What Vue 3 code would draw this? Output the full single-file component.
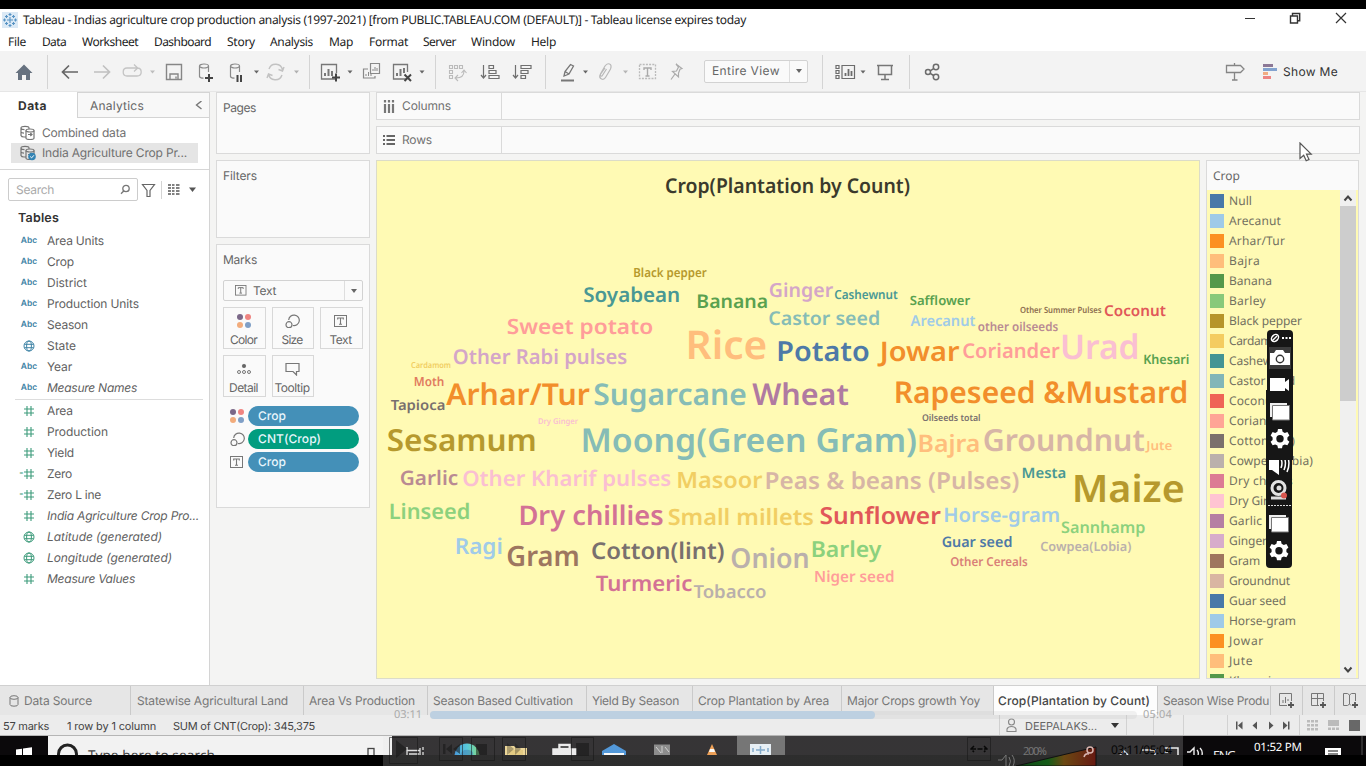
<script setup>
const vFit = {
  mounted(el, { value }) {
    const n = el.textContent.trim().length
    const natural = el.getBoundingClientRect().width
    if (value && n > 1) el.style.letterSpacing = ((value - natural) / n).toFixed(3) + 'px'
  }
}

const menus = [['File', 18, 16], ['Data', 24, 16], ['Worksheet', 56, 16], ['Dashboard', 57, 16], ['Story', 28, 15], ['Analysis', 43, 16], ['Map', 24, 16], ['Format', 39, 15], ['Server', 33, 15], ['Window', 44, 16], ['Help', 25, 0]]

const dims = [
  ['abc', 'Area Units', 57], ['abc', 'Crop', 27], ['abc', 'District', 40], ['abc', 'Production Units', 92],
  ['abc', 'Season', 41], ['geo', 'State', 29], ['abc', 'Year', 25], ['abc', 'Measure Names', 90, true]
]
const measures = [
  ['num', 'Area', 26], ['num', 'Production', 61], ['num', 'Yield', 27], ['calc', 'Zero', 25], ['calc', 'Zero L ine', 54],
  ['num', 'India Agriculture Crop Pro...', 152, true], ['geo', 'Latitude (generated)', 115, true],
  ['geo', 'Longitude (generated)', 125, true], ['num', 'Measure Values', 88, true]
]

const words = [
  ['Black pepper', 634, 706, 276.7, 12.5, '#b6992d'], ['Soyabean', 584.5, 679, 301.5, 20.5, '#499894'],
  ['Banana', 697.5, 767, 308, 19, '#59a14f'], ['Ginger', 770, 832, 296.7, 19.5, '#d4a6c8'],
  ['Cashewnut', 835, 897, 299.3, 12.5, '#499894'], ['Safflower', 910.5, 969.5, 305, 12.8, '#59a14f'],
  ['Castor seed', 769.5, 879, 324.7, 19, '#86bcb6'], ['Sweet potato', 508, 652, 333.7, 21, '#ff9d9a'],
  ['Arecanut', 911.5, 974.5, 326, 15, '#a0cbe8'], ['other oilseeds', 978.5, 1057.5, 331, 12.3, '#b98a93'],
  ['Other Summer Pulses', 1020.5, 1101, 313, 8.6, '#8c6d4e'], ['Coconut', 1105, 1165, 316, 15, '#e15759'],
  ['Rice', 688, 765, 358.5, 39.5, '#ffbe7d'], ['Potato', 778, 868, 361.3, 27.5, '#4e79a7'],
  ['Jowar', 881.5, 958, 360.7, 27, '#f28e2b'], ['Coriander', 963.5, 1058.5, 357.7, 20.3, '#ff9d9a'],
  ['Urad', 1062, 1137.5, 358.5, 34, '#fabfd2'], ['Khesari', 1144, 1188.5, 364, 13, '#59a14f'],
  ['Other Rabi pulses', 454, 626, 364, 20.5, '#d4a6c8'], ['Cardamom', 411.5, 450.5, 368, 8.3, '#f1ce63'],
  ['Moth', 414.5, 443.5, 386, 12.5, '#e17a60'], ['Tapioca', 391.5, 444.5, 410, 14, '#79706e'],
  ['Arhar/Tur', 448, 588, 405, 30, '#f28e2b'], ['Sugarcane', 595, 745, 405, 30, '#86bcb6'],
  ['Wheat', 754, 847, 405, 30, '#b07aa1'], ['Rapeseed &Mustard', 895.5, 1186.5, 402.7, 30, '#f28e2b'],
  ['Oilseeds total', 922.5, 980, 421, 9.3, '#79706e'], ['Dry Ginger', 538.5, 577.5, 424, 8, '#fabfd2'],
  ['Sesamum', 388.5, 535, 450.7, 30.5, '#b6992d'], ['Moong(Green Gram)', 582.5, 915, 451.7, 33, '#86bcb6'],
  ['Bajra', 919, 979, 451.7, 24, '#ffbe7d'], ['Groundnut', 984.5, 1143, 450.7, 30.5, '#d7b5a6'],
  ['Jute', 1147, 1171.5, 450, 12.5, '#ffbe7d'], ['Garlic', 401, 457, 484.7, 20, '#b98a93'],
  ['Other Kharif pulses', 463.5, 670, 486.3, 21.5, '#fabfd2'], ['Masoor', 677.5, 761, 488.3, 22.5, '#f1ce63'],
  ['Peas & beans (Pulses)', 766, 1018, 488.5, 23.5, '#d7b5a6'], ['Mesta', 1022.5, 1065.5, 478.3, 14.5, '#499894'],
  ['Maize', 1074, 1182.5, 502.3, 38, '#b6992d'], ['Linseed', 390, 469, 518.7, 21.5, '#8cd17d'],
  ['Dry chillies', 520, 662, 524.7, 27, '#d37295'], ['Small millets', 669, 812.5, 524.7, 22.5, '#f1ce63'],
  ['Sunflower', 821, 939.5, 523.5, 23.5, '#e15759'], ['Horse-gram', 944.5, 1059, 521.7, 20, '#a0cbe8'],
  ['Sannhamp', 1062, 1144.5, 533.3, 16, '#8cd17d'], ['Ragi', 456, 501.5, 553.7, 22, '#a0cbe8'],
  ['Gram', 508, 578, 565.7, 28, '#9d7660'], ['Cotton(lint)', 592.5, 723, 558.5, 23, '#79706e'],
  ['Onion', 732, 808, 567.5, 27.5, '#bab0ac'], ['Barley', 812, 880, 556.7, 22, '#8cd17d'],
  ['Guar seed', 942.5, 1011.5, 546.8, 14.5, '#4e79a7'], ['Cowpea(Lobia)', 1041, 1130.5, 551.3, 12.8, '#bab0ac'],
  ['Other Cereals', 951, 1027, 566, 12.3, '#d98078'], ['Niger seed', 815, 893.5, 582, 15.5, '#ff9d9a'],
  ['Turmeric', 597, 691, 590.7, 21.5, '#d37295'], ['Tobacco', 694.5, 765.5, 597.7, 18, '#bab0ac']
]

const legend = [
  ['Null', '#4878a8', 23], ['Arecanut', '#9fcae8', 52], ['Arhar/Tur', '#fc9022', 56], ['Bajra', '#ffbe7b', 31], ['Banana', '#54984a', 43],
  ['Barley', '#88c97a', 37], ['Black pepper', '#b6942a', 73], ['Cardamom', '#f4cc60', 60], ['Cashewnut', '#449494', 62],
  ['Castor seed', '#82b6b8', 66], ['Coconut', '#ef6456', 48], ['Coriander', '#ffa596', 57], ['Cotton(lint)', '#7b706c', 66],
  ['Cowpea(Lobia)', '#bbb0ac', 84], ['Dry chillies', '#dc7b94', 64], ['Dry Ginger', '#ffc4d2', 60], ['Garlic', '#b57fa3', 33],
  ['Ginger', '#d7accb', 38], ['Gram', '#9f765e', 31], ['Groundnut', '#d9b5a2', 61], ['Guar seed', '#4878a8', 57],
  ['Horse-gram', '#9fcae8', 67], ['Jowar', '#fc9022', 35], ['Jute', '#ffbe7b', 24], ['Khesari', '#54984a', 42]
]

const tabs = [
  ['Statewise Agricultural Land', 173, 151], ['Area Vs Production', 124, 106], ['Season Based Cultivation', 159, 140],
  ['Yield By Season', 106, 87], ['Crop Plantation by Area', 149, 131], ['Major Crops growth Yoy', 152, 133],
  ['Crop(Plantation by Count)', 164, 152, true], ['Season Wise Produ', 113, 106]
]
</script>

<template>
  <div class="screen">
    <svg class="defs" width="0" height="0">
      <defs>
        <g id="geo" fill="none" stroke="currentColor" stroke-width="1"><circle cx="6" cy="6" r="5" /><ellipse cx="6" cy="6" rx="2.4" ry="5" /><path d="M1.4 4.3h9.2M1.4 7.7h9.2" /></g>
        <g id="num" fill="none" stroke="currentColor" stroke-width="1.1"><path d="M1 4h10M1 8h10M4 1v10M8 1v10" /></g>
        <g id="dots4"><circle cx="3" cy="3" r="3" fill="#7b6888" /><circle cx="11" cy="3" r="3" fill="#ef8481" /><circle cx="3" cy="11" r="3" fill="#f2ac7c" /><circle cx="11" cy="11" r="3" fill="#7f9fc6" /></g>
        <g id="sizes" fill="none" stroke="#777" stroke-width="1.2"><path d="M3.7 6A5.3 5.3 0 1 1 7.8 11.5" /><circle cx="4" cy="10.7" r="3" /></g>
        <g id="tbox"><rect x=".5" y=".5" width="12" height="11" fill="none" stroke="#777" /><path d="M3.7 4.5V3h5.6v1.5M6.5 3v6M5 9.2h3" fill="none" stroke="#777" stroke-width="1.1" /></g>
        <g id="cyl" fill="none" stroke="#8a8a8a" stroke-width="1.2"><ellipse cx="5" cy="2.5" rx="4.5" ry="2" /><path d="M.5 2.5v10.5q.5 1.6 4 1.6M9.5 2.5v6" /></g>
        <g id="dd"><path d="M0 0h5L2.500 3z" /></g>
        <g id="dbs" fill="none" stroke="#757575" stroke-width="1.200"><path d="M6 12H4q-2.500 0-3-1.500V3M1 3q0-1.700 4-1.700T9 3v1M1 3q0 1.500 3.500 1.600M1 7q.5 1 3 1.200" /><ellipse cx="10" cy="5.500" rx="4" ry="1.500" /><path d="M6 5.500v7.500q0 1.500 4 1.500t4-1.500V5.500M8 9.500h4M10.300 8l1.700 1.500-1.700 1.500" /></g>
        <g id="gear"><path fill-rule="evenodd" d="M8 0h4l.6 2.700 2.200 1.200 2.600-.8 2 3.400-2 1.900v2.500l2 1.900-2 3.400-2.600-.8-2.200 1.200L12 19.300H8l-.6-2.700-2.200-1.200-2.600.8-2-3.400 2-1.900V8.400l-2-1.900 2-3.400 2.600.8 2.200-1.200zM10 6a3.700 3.700 0 1 0 0 7.400A3.700 3.700 0 0 0 10 6z" fill="#fff" /></g>
      </defs>
    </svg>

    <header class="title">
      <svg class="logo" width="16" height="16"><rect width="16" height="16" fill="#dbe9f5" /><g fill="none" stroke="#5793c4" stroke-width="1.100"><path d="M8 5v6M5 8h6M8 1v3M6.500 2.500h3M8 12v3M6.500 13.500h3M2.500 6.500v3M1 8h3M13.500 6.500v3M12 8h3M4.500 3v3M3 4.500h3M11.500 3v3M10 4.500h3M4.500 10v3M3 11.500h3M11.500 10v3M10 11.500h3" /></g></svg>
      <span v-fit="723" class="win-text">Tableau - Indias agriculture crop production analysis (1997-2021) [from PUBLIC.TABLEAU.COM (DEFAULT)] - Tableau license expires today</span>
      <svg class="winbtns" width="120" height="22" fill="none" stroke="#333" stroke-width="1.200"><path d="M5 9.500h10M96 4l10 10M106 4l-10 10" /><path d="M50.500 7h7v7h-7zM52.500 7V4.500h7.200v7.200H57.500" stroke-width="1.400" /></svg>
    </header>

    <nav class="menu">
      <span v-for="m in menus" :key="m[0]" class="menu-item win-text" :style="{ width: m[1] + m[2] + 'px' }"><span v-fit="m[1]">{{ m[0] }}</span></span>
    </nav>

    <div class="toolbar">
      <svg class="grp g1" width="47" height="41"><path d="M24 13.500l8.500 8.500H30v7h-4v-5h-4v5h-4v-7h-2.500z" fill="#66717f" /></svg>
      <svg class="grp divided" width="262" height="41" fill="none">
        <g stroke-width="1.700"><path d="M30 21H15M21 14.500L14.500 21l6.500 6.500" stroke="#666" /><path d="M46 21h15M55 14.500l6.500 6.500-6.500 6.500" stroke="#c0c0c0" /></g>
        <path d="M83 17h-6.500q-3.800 0-3.800 4t3.800 4h10q4.200 0 4.200-4t-4-4M83.500 13.500l3.700 3.500-3.700 3.500M83 17h4" transform="translate(2.500,0)" stroke="#c4c4c4" stroke-width="1.300" />
        <use href="#dd" x="102" y="19.500" fill="#bdbdbd" />
        <path d="M118.500 13.500h15v15h-15zM122 28v-5h8v5M128 25.500v2" stroke="#868686" stroke-width="1.400" />
        <use href="#cyl" x="151" y="12.500" /><path d="M161 23v8M157 27h8" stroke="#444" stroke-width="2" />
        <use href="#cyl" x="182" y="12.500" /><path d="M189.500 24v7M193 24v7" stroke="#444" stroke-width="2" />
        <use href="#dd" x="206" y="19.500" fill="#666" />
        <path d="M221 18a7 7 0 0 1 13.500 1M234 24a7 7 0 0 1-13.500-1M236 16l-1.500 4-4-1.500M219 27l1.500-4 4 1.500" stroke="#c2c2c2" stroke-width="1.400" />
        <use href="#dd" x="246" y="19.500" fill="#b0b0b0" />
      </svg>
      <svg class="grp divided" width="126" height="41" fill="none">
        <path d="M25 28H11.500V13.500h15V22" stroke="#777" stroke-width="1.300" /><path d="M15 25v-3M18.500 25v-7M22 25v-5" stroke="#777" stroke-width="2" /><path d="M26 22.500v8M22 26.500h8" stroke="#444" stroke-width="2" />
        <use href="#dd" x="37.500" y="19.500" fill="#666" />
        <path d="M60.500 12.500h9v10h-9zM58 18h-4.500v9H65v-2" stroke="#888" stroke-width="1.200" /><path d="M63 20v-2M65 20v-4M67 20v-3M56 25v-2M58.500 25v-4M61 25v-2" stroke="#888" />
        <path d="M96 28H83.500V13.500h14V21" stroke="#777" stroke-width="1.300" /><path d="M87 25v-3M90.500 25v-7M94 22v-5" stroke="#777" stroke-width="2" /><path d="M94.500 23.500l6.500 6.500M101 23.500l-6.500 6.500" stroke="#444" stroke-width="2" />
        <use href="#dd" x="109.500" y="19.500" fill="#666" />
      </svg>
      <svg class="grp divided" width="110" height="41" fill="none">
        <g stroke="#bbb" stroke-width="1.100"><path d="M13.500 14.500h3v3h-3zM18.500 14.500h3v3h-3zM23.500 14.500h3v3h-3zM13.500 19.500h3v3h-3zM13.500 24.500h3v3h-3z" /><path d="M28 20q0 7-8 7M22 24l-3 3 3 3M25.500 22l2.500-3 2.500 3" /></g>
        <g stroke="#707070" stroke-width="1.200"><path d="M47.500 14v13M45 24l2.500 3 2.500-3M53 14.500h4.500v3H53zM53 19.500h7v3h-7zM53 24.500h10v3H53z" /><path d="M79.500 14v13M77 24l2.500 3 2.500-3M85 14.500h10v3H85zM85 19.500h7v3h-7zM85 24.500h4.500v3H85z" /></g>
      </svg>
      <svg class="grp divided" width="159" height="41" fill="none">
        <path d="M18 25l1-4.500 5.500-7 3 1.500-4.500 8zM19 20.500l4 2.500" stroke="#777" stroke-width="1.300" /><path d="M15 29.500h13" stroke="#777" stroke-width="2" /><use href="#dd" x="37" y="19.500" fill="#666" />
        <path d="M59 17l-5 7q-1 3 1.500 4t4-1.500l5-8.500q1.500-4-1-5t-4.500 2l-4.500 8q-.5 2.500 1.500 2l4.500-7" stroke="#b8b8b8" stroke-width="1.200" /><use href="#dd" x="77" y="19.500" fill="#b5b5b5" />
        <path d="M93.500 13.500h16v14h-16z" stroke="#bbb" stroke-width="1.300" stroke-dasharray="2 1.200" /><path d="M98 19v-2h7v2M101.500 17v8M99.500 25h4" stroke="#aaa" stroke-width="1.400" />
        <path d="M130 13l6 4.500-2 .8-1.500 3.700v4l-6-5.500 4-.5 2-4zM129 23l-4 5.500" stroke="#aaa" stroke-width="1.200" />
      </svg>
      <div class="select view"><span v-fit="68">Entire View</span><i class="arrow"></i></div>
      <svg class="grp divided view-end" width="87" height="41" fill="none">
        <g stroke="#6c6c6c" stroke-width="1.200"><path d="M13 14.500h3v3h-3zM13 19.500h3v3h-3zM13 24.500h3v3h-3zM19 14.500h12.500v13H19z" /><path d="M22.500 25v-3M25.500 25v-7M28.500 25v-5" stroke-width="1.800" /></g><use href="#dd" x="37.500" y="19.500" fill="#666" />
        <path d="M54 14.500h16M55.500 15v8.500h13V15M62 24v5M58 28.500h8" stroke="#777" stroke-width="1.500" />
      </svg>
      <svg class="grp divided" width="60" height="41" fill="none" stroke="#6c6c6c" stroke-width="1.500"><circle cx="18" cy="21" r="2.500" /><circle cx="26" cy="16" r="2.700" /><circle cx="26" cy="26" r="2.700" /><path d="M20.200 19.800l3.400-2.200M20.200 22.300l3.400 2.200" /></svg>
      <svg class="guide" width="55" height="41" fill="none"><path d="M4.500 14.500h14l3.500 3.500-3.500 3.500h-14zM12.500 12v2.500M12.500 22v7M10 29h5.500" stroke="#858585" stroke-width="1.300" /><path d="M41 14.500h10" stroke="#8c7896" stroke-width="3" /><path d="M41 18.500h14" stroke="#83a3cf" stroke-width="3" /><path d="M41 22.500h5" stroke="#f1ac82" stroke-width="3" /><path d="M41 26.500h8" stroke="#ec8583" stroke-width="3" /></svg>
      <span class="showme" v-fit="55">Show Me</span>
    </div>

    <main class="work">
      <aside class="side">
        <div class="side-tabs"><div class="st-active"><b v-fit="29">Data</b></div><div class="st-other"><span v-fit="54">Analytics</span><svg width="8" height="10" fill="none" stroke="#777" stroke-width="1.400"><path d="M6.500 0L1.500 4l5 4" /></svg></div></div>
        <div class="sources">
          <div class="src"><svg width="16" height="16"><use href="#dbs" /></svg><span v-fit="84">Combined data</span></div>
          <div class="src sel"><svg width="16" height="16"><use href="#dbs" /><circle cx="12" cy="11.500" r="3.800" fill="#3484b4" /><path d="M10.200 11.500l1.400 1.400 2.300-2.600" fill="none" stroke="#fff" /></svg><span v-fit="145">India Agriculture Crop Pr...</span></div>
        </div>
        <div class="searchrow">
          <div class="search"><span v-fit="38">Search</span><svg width="11" height="11" fill="none" stroke="#777" stroke-width="1.300"><circle cx="6" cy="4.500" r="3.200" /><path d="M3.700 7L1 9.700" /></svg></div>
          <svg width="62" height="20" fill="none"><path d="M4.500 4.500h12l-4.500 6v6H9v-6z" stroke="#666" stroke-width="1.200" /><path d="M23.500 1v18" stroke="#d4d4d4" /><g stroke="#808080" stroke-width="1.800"><path d="M30 5h3M34 5h2.500M38 5h3.500M30 8h3M34 8h2.500M38 8h3.500M30 11h3M34 11h2.500M38 11h3.500M30 14h3M34 14h2.500M38 14h3.500" /></g><path d="M51 7.500h7l-3.500 4.500z" fill="#555" /></svg>
        </div>
        <h3 class="tables"><span v-fit="41">Tables</span></h3>
        <div v-for="d in dims" :key="d[1]" class="field" :class="{ it: d[3] }">
          <span class="fi blue"><b v-if="d[0] === 'abc'">Abc</b><svg v-else width="12" height="12"><use href="#geo" /></svg></span><span v-fit="d[2]">{{ d[1] }}</span>
        </div>
        <div class="rule"></div>
        <div v-for="d in measures" :key="d[1]" class="field" :class="{ it: d[3] }">
          <span class="fi green"><em v-if="d[0] === 'calc'">=</em><svg width="12" height="12"><use :href="d[0] === 'geo' ? '#geo' : '#num'" /></svg></span><span v-fit="d[2]">{{ d[1] }}</span>
        </div>
      </aside>

      <section class="shelves">
        <div class="card pages"><span v-fit="33">Pages</span></div>
        <div class="card filters"><span v-fit="34">Filters</span></div>
        <div class="card marks">
          <span v-fit="34">Marks</span>
          <div class="select mtype"><svg width="13" height="12"><use href="#tbox" transform="scale(.88)" /></svg><span v-fit="23">Text</span><i class="arrow"></i></div>
          <div class="mgrid">
            <div class="mbtn"><svg width="14" height="14"><use href="#dots4" /></svg><span v-fit="27">Color</span></div>
            <div class="mbtn"><svg width="15" height="14"><use href="#sizes" /></svg><span v-fit="21">Size</span></div>
            <div class="mbtn"><svg width="13" height="14"><use href="#tbox" y="1" /></svg><span v-fit="22">Text</span></div>
            <div class="mbtn"><svg width="14" height="14" fill="none" stroke="#777"><circle cx="7" cy="4" r="1.700" fill="#666" /><circle cx="2" cy="10" r="1.500" /><circle cx="7" cy="10" r="1.500" /><circle cx="12" cy="10" r="1.500" /></svg><span v-fit="29">Detail</span></div>
            <div class="mbtn"><svg width="15" height="14" fill="none" stroke="#777" stroke-width="1.200"><path d="M1 1.500h13v8h-2.500v3.500L8 9.500H1z" /></svg><span v-fit="35">Tooltip</span></div>
          </div>
          <div class="pillrow"><svg width="15" height="14"><use href="#dots4" /></svg><div class="pill"><span v-fit="28">Crop</span></div></div>
          <div class="pillrow"><svg width="15" height="14"><use href="#sizes" /></svg><div class="pill gr"><span v-fit="63">CNT(Crop)</span></div></div>
          <div class="pillrow"><svg width="15" height="14"><use href="#tbox" y="1" /></svg><div class="pill"><span v-fit="28">Crop</span></div></div>
        </div>
      </section>

      <section class="canvas">
        <div class="shelf"><div class="sh-label"><svg width="12" height="13" stroke="#777" stroke-width="2.200"><path d="M2 0v2.500M6 0v2.500M10 0v2.500M2 4v9M6 4v9M10 4v9" /></svg><span v-fit="49">Columns</span></div></div>
        <div class="shelf"><div class="sh-label"><svg width="12" height="12" stroke="#666" stroke-width="1.800"><path d="M0 2h2M3.500 2H12M0 6h2M3.500 6H12M0 10h2M3.500 10H12" /></svg><span v-fit="30">Rows</span></div></div>
        <div class="lower">
          <svg class="cloud" width="824" height="519" viewBox="377 161 822 517">
            <text x="665" y="192.800" font-size="20.500" textLength="245" lengthAdjust="spacingAndGlyphs" fill="#3b3a2c">Crop(Plantation by Count)</text>
            <text v-for="w in words" :key="w[0]" :x="w[1] - w[4] * 0.06" :y="w[3]" :font-size="w[4]" :textLength="w[2] - w[1] + w[4] * 0.12" lengthAdjust="spacingAndGlyphs" :fill="w[5]">{{ w[0] }}</text>
          </svg>
          <div class="legend">
            <div class="lhead"><span v-fit="27">Crop</span></div>
            <div class="lbody">
              <div class="llist"><div v-for="l in legend" :key="l[0]" class="lrow"><i :style="{ background: l[1] }"></i><span v-fit="l[2]">{{ l[0] }}</span></div></div>
              <div class="scroll"><svg width="16" height="16" fill="none" stroke="#444" stroke-width="2"><path d="M4.500 10.500L8 6.500l3.500 4" /></svg><div class="thumb"></div><svg class="down" width="16" height="16" fill="none" stroke="#444" stroke-width="2"><path d="M4.500 5.500L8 9.500l3.500-4" /></svg></div>
            </div>
          </div>
        </div>
      </section>
    </main>

    <div class="tabs">
      <div class="tab ds"><svg width="10" height="12" fill="none" stroke="#777"><ellipse cx="5" cy="2.500" rx="4" ry="1.800" /><path d="M1 2.500v7q0 1.700 4 1.700t4-1.700v-7" /></svg><span v-fit="68">Data Source</span></div>
      <div v-for="t in tabs" :key="t[0]" class="tab" :class="{ on: t[3] }" :style="{ width: t[1] + 'px' }"><span v-fit="t[2]">{{ t[0] }}</span></div>
      <div class="tab ic"><svg width="17" height="17" fill="none" stroke="#777"><path d="M9 13.500H1.500v-12h12V9M5 11V8M7.500 11V5M10 9V7" /><path d="M13 10v6M10 13h6" stroke="#555" stroke-width="1.800" /></svg></div>
      <div class="tab ic"><svg width="17" height="17" fill="none" stroke="#777"><path d="M9 13.500H1.500v-12h12V9M1.500 6.500h12M7.500 1.500v12" /><path d="M13 10v6M10 13h6" stroke="#555" stroke-width="1.800" /></svg></div>
      <div class="tab ic last"><svg width="17" height="17" fill="none" stroke="#777"><path d="M9 13.500L7.500 12l-2 1.500h-4v-12h4l2 1.500 2-1.500h4V9M7.500 3v9" /><path d="M13 10v6M10 13h6" stroke="#555" stroke-width="1.800" /></svg></div>
    </div>

    <div class="status">
      <span class="s1"><span v-fit="46">57 marks</span></span><span class="s2"><span v-fit="89">1 row by 1 column</span></span><span class="s3"><span v-fit="142">SUM of CNT(Crop): 345,375</span></span>
      <div class="user"><svg width="11" height="15" fill="none" stroke="#888" stroke-width="1.100"><circle cx="5.500" cy="4" r="3" /><path d="M1 13.500V11q1-2.500 4.500-2.500T10 11v2.500z" /></svg><span v-fit="72">DEEPALAKS...</span><svg width="8" height="5"><path d="M0 0h8L4 5z" fill="#333" /></svg></div>
      <div class="cell c1"></div><div class="cell c2"></div><div class="cell c3"></div>
      <svg class="cell" width="139" height="20"><g fill="#555"><path d="M8 6.500h1.500v8H8zM14.500 6.500v8l-4.500-4zM29 6.500v8l-4.500-4zM41 6.500v8l4.500-4zM55 6.500v8l4.500-4zM60 6.500h1.500v8H60z" /></g><path d="M71.500 0v20" stroke="#d0d0d0" /><g fill="#bbb"><path d="M79 5h3v2.500h-3zM83 5h3v2.500h-3zM87 5h3v2.500h-3zM79 9h3v2.500h-3zM83 9h3v2.500h-3zM87 9h3v2.500h-3zM79 13h3v2.500h-3zM83 13h3v2.500h-3zM87 13h3v2.500h-3zM100 5h11v6h-11zM100 12.500h3V15h-3zM104 12.500h3V15h-3zM108 12.500h3V15h-3z" /></g><path d="M121 5h11v11h-11z" fill="#686868" /></svg>
    </div>

    <div class="taskbar">
      <div class="start"><svg width="48" height="19"><path d="M16 13.500l6-.8V19h-6zM23 12.500l9-1.200V19h-9z" fill="#fff" /></svg></div>
      <div class="find"><svg width="24" height="19" fill="none" stroke="#222" stroke-width="3"><circle cx="11.500" cy="18" r="9" /></svg><span v-fit="127">Type here to search</span><svg class="mic" width="8" height="19" fill="none" stroke="#444" stroke-width="1.300"><rect x="1" y="12.500" width="6" height="14" /></svg></div>
      <svg class="apps" width="974" height="19">
        <g fill="none" stroke="#ddd" stroke-width="1.300"><path d="M15 11v8M15 14.500h13M28 12v7M31 11v3M31 16v3M17 18h10" /></g>
        <defs><linearGradient id="edge"><stop offset="0" stop-color="#2386d8" /><stop offset=".5" stop-color="#35c4d8" /><stop offset="1" stop-color="#6dd66c" /></linearGradient></defs>
        <circle cx="75" cy="20" r="12.500" fill="url(#edge)" /><path d="M68 19q2-6 9-5 5 1 4 5z" fill="#1a5fa4" opacity=".5" />
        <path d="M113 10h9l2 2h11v7h-22z" fill="#efd486" /><path d="M117 14h14v5h-14z" fill="#d8b450" opacity=".5" />
        <path d="M161 13h23v6h-23zM167 13V8.500h11V13" fill="#eee" stroke="#eee" stroke-width="1.500" /><path d="M168.500 12V10h8v2z" fill="#333" />
        <path d="M210 19v-4l12-7 12 7v4z" fill="#2f86d7" /><path d="M212 17h20v2h-20z" fill="#fff" />
        <path d="M262 8.500h16V19h-16z" fill="#777" /><path d="M264 11l5 6M270 10v7M273 11l4 5" stroke="#ccc" />
        <path d="M345 0h48v19h-48z" fill="#5b5b5b" /><path d="M320 8l5 11h-10z" fill="#f09035" /><path d="M318 13h4l1 3h-6z" fill="#fff" />
        <path d="M358 8h21v11h-21z" fill="#e8f2f9" /><path d="M368.500 10v8M364 14h9M361 12v4M376 12v4" stroke="#6b9cc4" stroke-width="1.500" />
        <path d="M728 19l4-4 4 4M750 14h13v5M772 12h14v7M772 16h4" fill="none" stroke="#eee" stroke-width="1.500" /><path d="M795 16h3l4-4v7M805 14q2 2 1 5M808 12q3 3 2 7" fill="none" stroke="#eee" stroke-width="1.400" />
        <text x="821" y="23.500" font-size="12.500" fill="#eee" textLength="23">ENG</text><text x="862" y="15" font-size="11.500" fill="#fff" textLength="48">01:52 PM</text>
        <path d="M933 12h16v7h-16z" fill="#fff" /><path d="M936 15h10M936 18h10" stroke="#111" stroke-width="1.200" /><path d="M970 0v19" stroke="#555" />
      </svg>
    </div>

    <div class="player">
      <div class="prow"><span v-fit="28">03:11</span><div class="track"><div class="bar"></div></div><span v-fit="29">05:04</span></div>
      <svg width="800" height="36">
        <g fill="none" stroke="#151515" stroke-opacity=".55"><path d="M6.500 7.500h28v26h-28zM56.500 7.500h23v23h-23zM88.500 7.500h23v23h-23zM119.500 7.500h23v23h-23zM188.500 7.500h22v23h-22zM584.500 7.500h23v23h-23z" /></g>
        <g fill="#151515" fill-opacity=".55"><path d="M13 10l11 9-11 9zM60 14h2.500v10H60zM69 14v10l-6-5zM77 14v10l-7-5zM93 14h11v11H93z" /><path d="M124 13l7 6-7 6zM132 13l6 6-6 6z" fill-opacity=".3" /><path d="M193 13h13v13h-13z" /></g>
        <path d="M588 19h16M591 16l-3 3 3 3M601 16l3 3-3 3" fill="none" stroke="#080808" stroke-width="1.500" stroke-dasharray="5 1.500" />
        <text x="640" y="25" font-size="11" fill="#777" textLength="24">200%</text>
        <defs><linearGradient id="vol"><stop offset="0" stop-color="#104818" /><stop offset=".4" stop-color="#145c18" /><stop offset=".6" stop-color="#6b4812" /><stop offset="1" stop-color="#671912" /></linearGradient></defs>
        <path d="M633 36l80-19v19z" fill="url(#vol)" stroke="#111" /><circle cx="707" cy="20" r="3" fill="none" stroke="#d9b5b0" stroke-width="1.500" /><path d="M701 27q1-4 5-3" fill="none" stroke="#d9b5b0" stroke-width="1.500" />
        <path d="M615 30h4l4-5v11M626 27q3 4 0 9M629 25q4 5 1 11" fill="none" stroke="#777" />
        <text x="728" y="24" font-size="12" fill="#050505" textLength="61">03:11/05:04</text>
      </svg>
    </div>

    <svg class="recorder" width="28" height="240">
      <path d="M0 60h26v174a4 4 0 0 1-4 4H4a4 4 0 0 1-4-4z" fill="#161616" />
      <path d="M3 130h3l7-6v21l-7-5H3z" fill="#fff" /><path d="M15 129q2 4 0 9M18 127q3 6 0 13M21 125q4 8 0 17" fill="none" stroke="#fff" stroke-width="1.500" />
      <path d="M5 0h18a4 4 0 0 1 4 4v126H1V4a4 4 0 0 1 4-4z" fill="#161616" />
      <ellipse cx="9" cy="8" rx="4" ry="3" transform="rotate(-45 9 8)" fill="none" stroke="#fff" stroke-width="1.500" /><path d="M6 11l5-5" stroke="#fff" stroke-width="1.500" /><path d="M16 8h2M19.500 8h2M23 8h2" stroke="#fff" stroke-width="2" />
      <path d="M3 17h22v22H3z" fill="#3b3b3b" /><path d="M4 23h4l2-3h7l2 3h5v12H4z" fill="#fff" /><circle cx="14" cy="29" r="3.700" fill="#fff" stroke="#333" stroke-width="1.400" />
      <path d="M4 48h15v4l4-3v12l-4-3v3H4z" fill="#fff" />
      <path d="M4 73h17v14H4z" fill="#eee" /><path d="M6.500 75.500h17v14.500h-17z" fill="#fff" stroke="#777" />
      <use href="#gear" x="4" y="99" />
      <circle cx="12.500" cy="158" r="6.500" fill="none" stroke="#e2e2e2" stroke-width="3" /><circle cx="13" cy="158" r="2.500" fill="#ddd" /><path d="M5 168h15" stroke="#ddd" stroke-width="3" /><circle cx="18" cy="165.500" r="3" fill="#d8564e" />
      <path d="M2 175.500h23" stroke="#ddd" stroke-dasharray="2 1" />
      <path d="M3 185h17v14H3z" fill="#eee" /><path d="M5.500 187.500h17v14.500h-17z" fill="#fff" stroke="#777" />
      <use href="#gear" x="3" y="211" />
    </svg>
    <svg class="cursor" width="14" height="21"><path d="M1 1v15.500l3.700-3.200 2.500 5.500 2.800-1.300-2.500-5.300h4.700z" fill="#fff" stroke="#555" stroke-width="1.200" /></svg>
  </div>
</template>

<style>
body { background: #000; overflow: hidden; }
</style>
<style scoped>
* { box-sizing: border-box; }
.screen { position: relative; width: 1366px; height: 766px; overflow: hidden; padding-top: 9px; background: #000; display: flex; flex-direction: column; font: 12px/16px Inter, "Liberation Sans", sans-serif; color: #666; text-rendering: geometricPrecision; white-space: nowrap; }
.screen span, .screen b { white-space: nowrap; }
.defs { position: absolute; }
svg { display: block; flex: none; }
.screen [style] { flex-shrink: 0; }
.win-text { font-family: "Noto Sans", sans-serif; font-size: 12px; color: #222; }
.title { height: 22px; flex: none; background: #fff; display: flex; align-items: center; padding-left: 2px; }
.logo { margin-right: 5px; }
.winbtns { margin-left: auto; margin-right: 6px; }
.menu { height: 20px; flex: none; background: #fff; display: flex; align-items: center; padding: 2px 0 0 8px; }
.menu-item { display: inline-block; }
.menu-item span { display: inline-block; }
.toolbar { height: 41px; flex: none; background: #f3f3f3; display: flex; align-items: center; border-bottom: 1px solid #e6e6e6; }
.divided { padding-left: 1px; background: linear-gradient(#d4d4d4, #d4d4d4) 0 4px / 1px 34px no-repeat; }
.select { display: flex; align-items: center; background: #fafafa; border: 1px solid #d2d2d2; border-radius: 2px; }
.arrow { margin-left: auto; align-self: stretch; width: 18px; border-left: 1px solid #dedede; display: flex; align-items: center; justify-content: center; }
.arrow::after { content: ""; border: 3.5px solid transparent; border-top: 4px solid #666; border-bottom: 0; }
.view { width: 104px; height: 23px; padding-left: 7px; }
.view-end { margin-left: 14px; }
.guide { margin-left: auto; margin-right: 6px; }
.showme { width: auto; margin-right: 28px; color: #333; padding-top: 1px; }
.work { height: 593px; flex: none; display: flex; background: #f4f4f3; }
.side { width: 210px; background: #fff; border-right: 1px solid #d4d4d4; }
.side-tabs { display: flex; height: 26px; }
.st-active { width: 77px; padding: 6px 0 0 18px; color: #333; }
.st-other { flex: 1; padding: 2px 6px 0 12px; background: #f8f8f8; border: solid #d4d4d4; border-width: 1px 0 1px 1px; display: flex; align-items: center; justify-content: space-between; }
.sources { height: 52px; border-bottom: 1px solid #d6d6d6; padding: 5px 11px 0; color: #707070; }
.src { height: 20px; display: flex; align-items: center; gap: 6px; padding-left: 9px; }
.src.sel { background: #e5e5e5; }
.searchrow { display: flex; align-items: center; padding: 8px 0 0 8px; }
.search { width: 130px; height: 23px; border: 1px solid #ccc; border-radius: 2px; padding: 0 6px 0 7px; display: flex; align-items: center; justify-content: space-between; color: #aaa; }
.tables { margin: 10px 0 4px 18px; height: 15px; line-height: 15px; font-size: 12.5px; color: #333; font-weight: 600; }
.field { height: 21px; display: flex; align-items: center; color: #5f5f5f; }
.field.it { font-style: italic; }
.fi { width: 47px; padding-left: 19px; display: flex; align-items: center; justify-content: center; padding-right: 8px; font-style: normal; position: relative; }
.fi b { font-size: 8.500px; font-weight: 600; padding-top: 1px; }
.fi em { position: absolute; left: 19px; top: -3px; font-size: 7px; font-style: normal; }
.blue { color: #3f84a6; }
.green { color: #3d9b7b; }
.rule { margin: 1px 6px 0 15px; height: 1px; background: #ddd; }
.shelves { width: 160px; margin: 0 6px; display: flex; flex-direction: column; gap: 6px; }
.card { width: 154px; background: #fafafa; border: 1px solid #dadada; padding: 7px 6px; }
.card > span { display: inline-block; }
.pages { height: 62px; }
.filters { height: 78px; }
.marks { height: 264px; }
.mtype { height: 21px; margin-top: 12px; padding-left: 11px; gap: 5px; }
.mgrid { display: grid; grid-template-columns: 43px 42px 43px; gap: 6px; margin-top: 6px; }
.mbtn { height: 42px; border: 1px solid #d8d8d8; display: flex; flex-direction: column; align-items: center; padding: 6px 2px 0 0; gap: 4px; }
.pillrow { display: flex; align-items: center; gap: 3px; padding-left: 7px; margin-top: 3px; height: 20px; }
.mgrid + .pillrow { margin-top: 9px; }
.pill { width: 111px; height: 20px; border-radius: 10px; background: #4490b8; color: #e9f6fc; padding: 2px 0 0 10px; font-weight: 500; }
.pill.gr { background: #019d7f; }
.canvas { flex: 1; min-width: 0; margin-left: -6px; display: flex; flex-direction: column; }
.shelf { width: 984px; height: 28px; margin-bottom: 6px; background: #fafafa; border: 1px solid #dadada; flex: none; display: flex; }
.sh-label { width: 125px; border-right: 1px solid #dadada; display: flex; align-items: center; gap: 7px; padding-left: 6px; color: #707070; }
.lower { display: flex; gap: 6px; height: 520px; }
.cloud { background: #fffab4; border: 1px solid #dcdcc8; font-family: "Noto Sans", sans-serif; font-weight: 600; height: 519px; }
.legend { width: 153px; height: 519px; border: 1px solid #dadada; background: #fafafa; display: flex; flex-direction: column; }
.lhead { height: 29px; padding: 7px 6px; font-family: "Noto Sans", sans-serif; }
.lbody { flex: 1; min-height: 0; display: flex; background: #fffab4; overflow: hidden; }
.llist { flex: 1; padding: 1px 0 0 3px; overflow: hidden; font-family: "Noto Sans", sans-serif; color: #727060; }
.lrow { height: 20px; display: flex; align-items: center; gap: 5px; }
.lrow i { width: 14px; height: 14px; }
.scroll { width: 16px; background: #f0f0ef; display: flex; flex-direction: column; margin-right: 2px; }
.thumb { height: 195px; background: #cdcdcd; }
.down { margin-top: auto; }
.tabs { height: 30px; flex: none; background: #e6e6e6; border-top: 1px solid #d0d0d0; display: flex; }
.tab { border-right: 1px solid #cacaca; padding-left: 5px; display: flex; align-items: center; color: #777; flex: none; overflow: hidden; }
.tab.ds { width: 131px; padding-left: 9px; gap: 5px; }
.ds + .tab { padding-left: 6px; }
.tab.on { background: #fdfdfd; color: #444; font-weight: 500; padding-left: 4px; }
.tab.ic { width: 32px; padding-left: 7px; }
.tab.last { width: 32px; border: 0; }
.status { height: 21px; flex: none; background: #ececec; border-bottom: 1px solid #b5b5b5; display: flex; align-items: center; font-size: 11px; color: #444; }
.status > span { padding-top: 1px; }
.s1 { width: 67px; padding-left: 3px; }
.s2 { width: 106px; }
.s3 { width: 826px; }
.user { width: 127px; height: 20px; border-left: 1px solid #d0d0d0; display: flex; align-items: center; padding: 1px 0 0 6px; gap: 8px; color: #666; }
.user span { margin-right: 6px; }
.cell { height: 20px; border-left: 1px solid #d2d2d2; flex: none; }
.c1 { width: 27px; }
.c2 { width: 30px; }
.c3 { width: 44px; }
.taskbar { height: 19px; flex: none; display: flex; background: #0b090b; overflow: hidden; }
.start { width: 48px; }
.find { width: 344px; background: #f2f2f2; display: flex; font: 13.5px/19px "Noto Sans", sans-serif; color: #444; padding-left: 8px; }
.find span { margin-left: 8px; padding-top: 10px; height: 30px; }
.mic { margin-left: auto; margin-right: 17px; }
.apps { font-family: "Noto Sans", sans-serif; }
.player { position: absolute; left: 383px; top: 706px; width: 800px; height: 60px; background: linear-gradient(transparent 30px, rgba(226, 226, 226, .2) 30px); display: flex; flex-direction: column; justify-content: space-between; font-family: "Noto Sans", sans-serif; }
.prow { display: flex; align-items: center; height: 18px; padding-left: 11px; font-size: 11px; color: #aaa; }
.track { width: 707px; height: 8px; margin: 0 6px 0 8px; background: rgba(190, 190, 190, .2); border-radius: 4px; }
.bar { width: 445px; height: 8px; border-radius: 4px; background: #bdd0e1; }
.recorder { position: absolute; left: 1266px; top: 330px; }
.cursor { position: absolute; left: 1299px; top: 142px; }
</style>
